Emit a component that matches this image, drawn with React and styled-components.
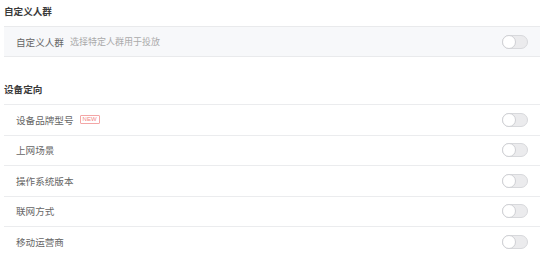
import styled, { createGlobalStyle } from "styled-components";

const GlobalStyle = createGlobalStyle`
  body {
    margin: 0;
    background: #fff;
    font-family: "Noto Sans CJK SC", "Noto Sans", sans-serif;
  }
`;

const deviceItems = [
  { label: "设备品牌型号", isNew: true },
  { label: "上网场景" },
  { label: "操作系统版本" },
  { label: "联网方式" },
  { label: "移动运营商" },
];

const Toggle = () => (
  <Track>
    <Knob />
  </Track>
);

const App = () => {
  return (
    <>
      <GlobalStyle />
      <Page>
        <SectionTitle>自定义人群</SectionTitle>
        <Card>
          <Label>自定义人群</Label>
          <Hint>选择特定人群用于投放</Hint>
          <Toggle />
        </Card>

        <SectionTitle $spaced>设备定向</SectionTitle>
        <List>
          {deviceItems.map((item) => (
            <Row key={item.label}>
              <Label>{item.label}</Label>
              {item.isNew && <NewBadge>NEW</NewBadge>}
              <Toggle />
            </Row>
          ))}
        </List>
      </Page>
    </>
  );
};
export default App;

const Page = styled.div`
  padding: 0 9px 0 4px;
`;

const SectionTitle = styled.div`
  height: 26px;
  line-height: 22px;
  margin-top: ${(p) => (p.$spaced ? "21px" : "0")};
  font-size: 9.6px;
  font-weight: 600;
  color: #3a3a3a;
`;

const Card = styled.div`
  display: flex;
  align-items: center;
  height: 29px;
  padding: 0 12px 0 12px;
  background: #f7f8fa;
  border-top: 1px solid #e9eaec;
  border-bottom: 1px solid #e9eaec;
`;

const Label = styled.span`
  font-size: 9.6px;
  color: #666;
`;

const Hint = styled.span`
  margin-left: 6px;
  font-size: 9px;
  color: #aaa;
`;

const List = styled.div`
  display: flex;
  flex-direction: column;
`;

const Row = styled.div`
  display: flex;
  align-items: center;
  height: 29.5px;
  padding: 0 12px 0 12px;
  border-top: 1px solid #ebecee;
`;

const NewBadge = styled.span`
  margin-left: 6px;
  height: 7px;
  padding: 0 2px;
  border: 1px solid #f3a6a6;
  border-radius: 1px;
  font-size: 6px;
  line-height: 7px;
  color: #f08484;
  font-family: "Liberation Sans", sans-serif;
`;

const Track = styled.div`
  position: relative;
  margin-left: auto;
  width: 26px;
  height: 14px;
  border: 1px solid #d8d9dc;
  border-radius: 8px;
  background: #ebebed;
  box-sizing: border-box;
`;

const Knob = styled.div`
  position: absolute;
  left: -1px;
  top: -1px;
  width: 14px;
  height: 14px;
  border-radius: 50%;
  background: #fff;
  border: 1px solid #cfd0d4;
  box-sizing: border-box;
`;
